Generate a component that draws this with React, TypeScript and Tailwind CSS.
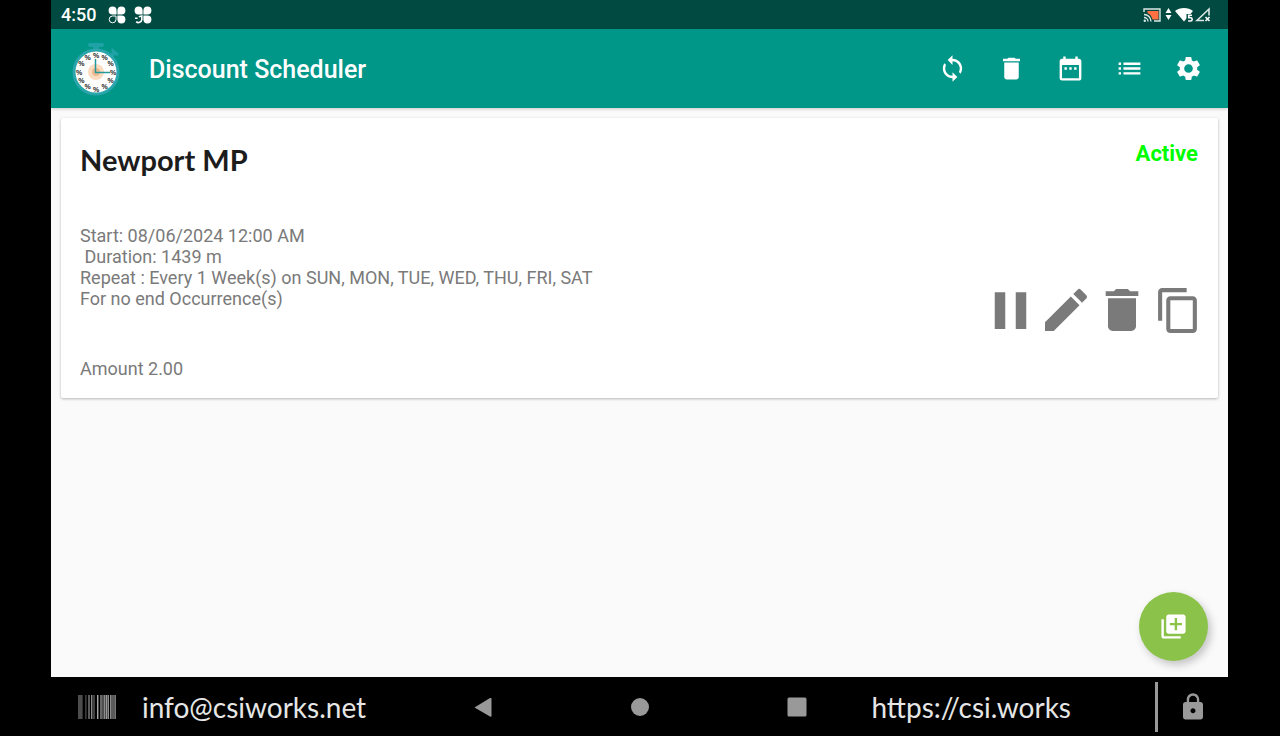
import type { ReactNode } from 'react'
import {
  MdContentCopy,
  MdDateRange,
  MdDelete,
  MdEdit,
  MdLibraryAdd,
  MdList,
  MdLock,
  MdPause,
  MdSettings,
  MdSync,
} from 'react-icons/md'

interface Schedule {
  id: number
  name: string
  status: string
  start: string
  duration: string
  repeat: string
  occurrence: string
  amount: string
}

const schedules: Schedule[] = [
  {
    id: 1,
    name: 'Newport MP',
    status: 'Active',
    start: 'Start: 08/06/2024 12:00 AM',
    duration: ' Duration: 1439 m',
    repeat: 'Repeat : Every 1 Week(s) on SUN, MON, TUE, WED, THU, FRI, SAT',
    occurrence: 'For no end Occurrence(s)',
    amount: 'Amount 2.00',
  },
]

const toolbarActions = [
  { label: 'Sync', icon: MdSync },
  { label: 'Delete all', icon: MdDelete },
  { label: 'Calendar', icon: MdDateRange },
  { label: 'List', icon: MdList },
  { label: 'Settings', icon: MdSettings },
]

const cardActions = [
  { label: 'Pause', icon: MdPause, size: 'size-[63px]' },
  { label: 'Edit', icon: MdEdit, size: 'size-14' },
  { label: 'Delete', icon: MdDelete, size: 'size-14' },
  { label: 'Copy', icon: MdContentCopy, size: 'size-[49px]' },
]

// x, width, shade
const barcode: [number, number, string][] = [
  [0, 4, '#4d4d4d'],
  [4, 1, '#2e2e2e'],
  [7, 1, '#3a3a3a'],
  [8, 1, '#242424'],
  [10, 2, '#5a5a5a'],
  [13, 1, '#8a8a8a'],
  [14, 3, '#3f3f3f'],
  [19, 1, '#a8a8a8'],
  [20, 1, '#4a4a4a'],
  [22, 2, '#666666'],
  [24, 2, '#4d4d4d'],
  [26, 1, '#8c8c8c'],
  [27, 1, '#4a4a4a'],
  [28, 1, '#9a9a9a'],
  [29, 1, '#555555'],
  [30, 1, '#8c8c8c'],
  [32, 1, '#8c8c8c'],
  [33, 4, '#5a5a5a'],
  [37, 1, '#777777'],
]

function CloverIcon({ arrow = false }: { arrow?: boolean }) {
  return (
    <svg className="size-[18px]" viewBox="0 0 18 18" fill="#fff" aria-hidden="true">
      <path d="M8.6 8.6H4.5A4 4 0 1 1 8.6 4.5Z" />
      <path d="M9.400 8.600V4.500A4 4 0 1 1 13.500 8.600Z" />
      <path d="M9.400 9.400h4.100a4 4 0 1 1-4.100 4.100Z" />
      {arrow ? (
        <path
          d="M1 12.200h2.600M7.800 10v3.600a3.300 3.300 0 0 1-5.600 2M4.800 10.700l3-.7v2"
          fill="none"
          stroke="#fff"
          strokeWidth="1.600"
        />
      ) : (
        <path d="M8 10H4.500A3.400 3.400 0 1 0 8 13.500Z" fill="none" stroke="#fff" strokeWidth="1" />
      )}
    </svg>
  )
}

function StatusIcons() {
  return (
    <svg className="h-4 w-[68px]" viewBox="0 0 68 16" aria-label="Cast, data, Wi-Fi and signal">
      {/* Cast */}
      <path d="M4.500 4h11v8.500H9.500C8.500 9 7.500 7.500 4.500 6Z" fill="#ff7043" />
      <path d="M1 5V2h16v12h-6" fill="none" stroke="#dbe7e5" strokeWidth="1.400" />
      <path d="M1 7.500a7 7 0 0 1 7 7M1 10.500a4 4 0 0 1 4 4" fill="none" stroke="#dbe7e5" strokeWidth="1.400" />
      <circle cx="1.800" cy="13.800" r="1.200" fill="#dbe7e5" />
      {/* Data arrows */}
      <path d="M25.500 1l3 5h-6ZM25.500 13l3-5h-6Z" fill="#fff" />
      {/* Wi-Fi */}
      <path d="M32 4C36.500 .1 45.500 .1 50 4L41 14.500Z" fill="#fff" />
      <path d="M43.500 7h8v9h-8Z" fill="#004a41" />
      <path
        d="M49 8.200h-3.300v2.400h1.800a1.700 1.700 0 0 1 0 3.400h-2.400"
        fill="none"
        stroke="#fff"
        strokeWidth="1.600"
      />
      {/* Signal */}
      <path d="M61 13.500H54L66 2v6.500" fill="none" stroke="#dbe7e5" strokeWidth="1.600" />
      <path d="M62.500 10l4 4M66.500 10l-4 4" stroke="#fff" strokeWidth="1.600" />
    </svg>
  )
}

function StopwatchLogo() {
  const marks = Array.from({ length: 12 }, (_, i) => (i * Math.PI) / 6)

  return (
    <svg className="h-[54px] w-[50px]" viewBox="0 0 50 54" aria-hidden="true">
      <g fill="#1fa2a6">
        <rect x="16" y="1" width="16" height="4" rx="2" />
        <rect x="21" y="4" width="6" height="5" />
        <path d="M40 6l7 6-2 2-2-1-3 3-3-3 3-3-1-2Z" />
      </g>
      <circle cx="24" cy="30" r="22" fill="#fff" stroke="#2ba5ac" strokeWidth="3" />
      <circle cx="24" cy="30" r="8" fill="#fbdcc0" />
      <circle cx="24" cy="30" r="4" fill="#efb98d" />
      <g
        fill="#222"
        fontFamily="'Liberation Sans', sans-serif"
        fontSize="7"
        fontWeight="700"
        textAnchor="middle"
      >
        {marks.map((a) => (
          <text key={a} x={24 + 17 * Math.sin(a)} y={32.5 - 17 * Math.cos(a)}>
            %
          </text>
        ))}
      </g>
      <path d="M23.500 17v13.500H38" fill="none" stroke="#23999a" strokeWidth="1.500" />
    </svg>
  )
}

function NavButton({ label, children }: { label: string; children: ReactNode }) {
  return (
    <button type="button" aria-label={label} className="flex size-8 items-center justify-center">
      <svg className="size-5" viewBox="0 0 20 20" fill="#999">
        {children}
      </svg>
    </button>
  )
}

function ScheduleCard({ schedule }: { schedule: Schedule }) {
  return (
    <article className="flex justify-between rounded-[2px] bg-white pt-6 pb-[19px] pl-[19px] shadow-[0_1px_3px_rgba(0,0,0,0.28)]">
      <div>
        <h2 className="font-['Lato',sans-serif] text-[29px] leading-9 font-bold text-[#1c1c1c]">
          {schedule.name}
        </h2>
        <div className="mt-[47px] text-[18px] leading-[21px] whitespace-pre-wrap text-[#7a7a7a]">
          <p>{schedule.start}</p>
          <p>{schedule.duration}</p>
          <p>{schedule.repeat}</p>
          <p>{schedule.occurrence}</p>
          <p className="mt-[49px]">{schedule.amount}</p>
        </div>
      </div>
      <div className="flex flex-col items-end">
        <span className="pr-5 text-[22px] leading-6 font-bold text-[#00ff00]">{schedule.status}</span>
        <div className="mt-[116px] flex pr-3">
          {cardActions.map(({ label, icon: Icon, size }) => (
            <button
              key={label}
              type="button"
              aria-label={label}
              className="flex size-14 items-center justify-center text-[#7a7a7a]"
            >
              <Icon className={`shrink-0 ${size}`} />
            </button>
          ))}
        </div>
      </div>
    </article>
  )
}

export default function App() {
  return (
    <div className="flex min-h-screen flex-col bg-black font-['Roboto',sans-serif]">
      <div className="mr-[52px] ml-[51px] flex flex-1 flex-col bg-[#fafafa]">
        {/* Status bar */}
        <div className="flex h-[29px] items-center justify-between bg-[#004a41] pr-[17px] pl-[10px]">
          <div className="flex items-center">
            <span className="mr-3 text-[18px] leading-5 font-medium text-white">4:50</span>
            <div className="flex gap-2">
              <CloverIcon />
              <CloverIcon arrow />
            </div>
          </div>
          <StatusIcons />
        </div>

        {/* App bar */}
        <header className="flex h-[79px] items-center justify-between bg-[#009688] pr-[25px] pl-[21px] shadow-[0_1px_3px_rgba(0,0,0,0.2)]">
          <div className="flex items-center gap-[27px]">
            <StopwatchLogo />
            <h1 className="pt-0.5 text-[25px] leading-8 font-medium text-white">Discount Scheduler</h1>
          </div>
          <div className="flex gap-[30px]">
            {toolbarActions.map(({ label, icon: Icon }) => (
              <button key={label} type="button" aria-label={label} className="text-white">
                <Icon className="size-[29px]" />
              </button>
            ))}
          </div>
        </header>

        <main className="flex flex-1 flex-col px-[10px] pt-[10px] pb-4">
          {schedules.map((schedule) => (
            <ScheduleCard key={schedule.id} schedule={schedule} />
          ))}
          <button
            type="button"
            aria-label="Add schedule"
            className="mt-auto mr-[10px] flex size-[69px] items-center justify-center self-end rounded-full bg-[#8bc34a] text-white shadow-[3px_4px_8px_rgba(0,0,0,0.22)]"
          >
            <MdLibraryAdd className="size-[29px]" />
          </button>
        </main>
      </div>

      {/* System navigation */}
      <footer className="grid h-[59px] grid-cols-[1fr_auto_1fr] items-center font-['Lato',sans-serif] text-[28px] leading-8 text-[#e6e6e6]">
        <div className="flex items-center gap-[26px] pl-[78px]">
          <svg className="h-6 w-[38px]" viewBox="0 0 38 24" aria-hidden="true">
            {barcode.map(([x, width, shade]) => (
              <rect key={x} x={x} y="0" width={width} height="24" fill={shade} />
            ))}
          </svg>
          <a href="mailto:info@csiworks.net">info@csiworks.net</a>
        </div>
        <nav className="flex gap-[125px]">
          <NavButton label="Back">
            <path d="M1.500 10.500L17 1Q18.500 .5 18.500 2v17Q18.500 20 17 19.500Z" />
          </NavButton>
          <NavButton label="Home">
            <circle cx="10" cy="10" r="9" />
          </NavButton>
          <NavButton label="Recent apps">
            <rect x="0.500" y="0.500" width="19" height="19" rx="1.500" />
          </NavButton>
        </nav>
        <div className="flex items-center justify-end pr-[72px]">
          <a href="https://csi.works">https://csi.works</a>
          <div className="mr-5 ml-[84px] h-[50px] w-[3px] bg-[#999]" />
          <button type="button" aria-label="Lock" className="text-[#999]">
            <MdLock className="size-[30px]" />
          </button>
        </div>
      </footer>
    </div>
  )
}
